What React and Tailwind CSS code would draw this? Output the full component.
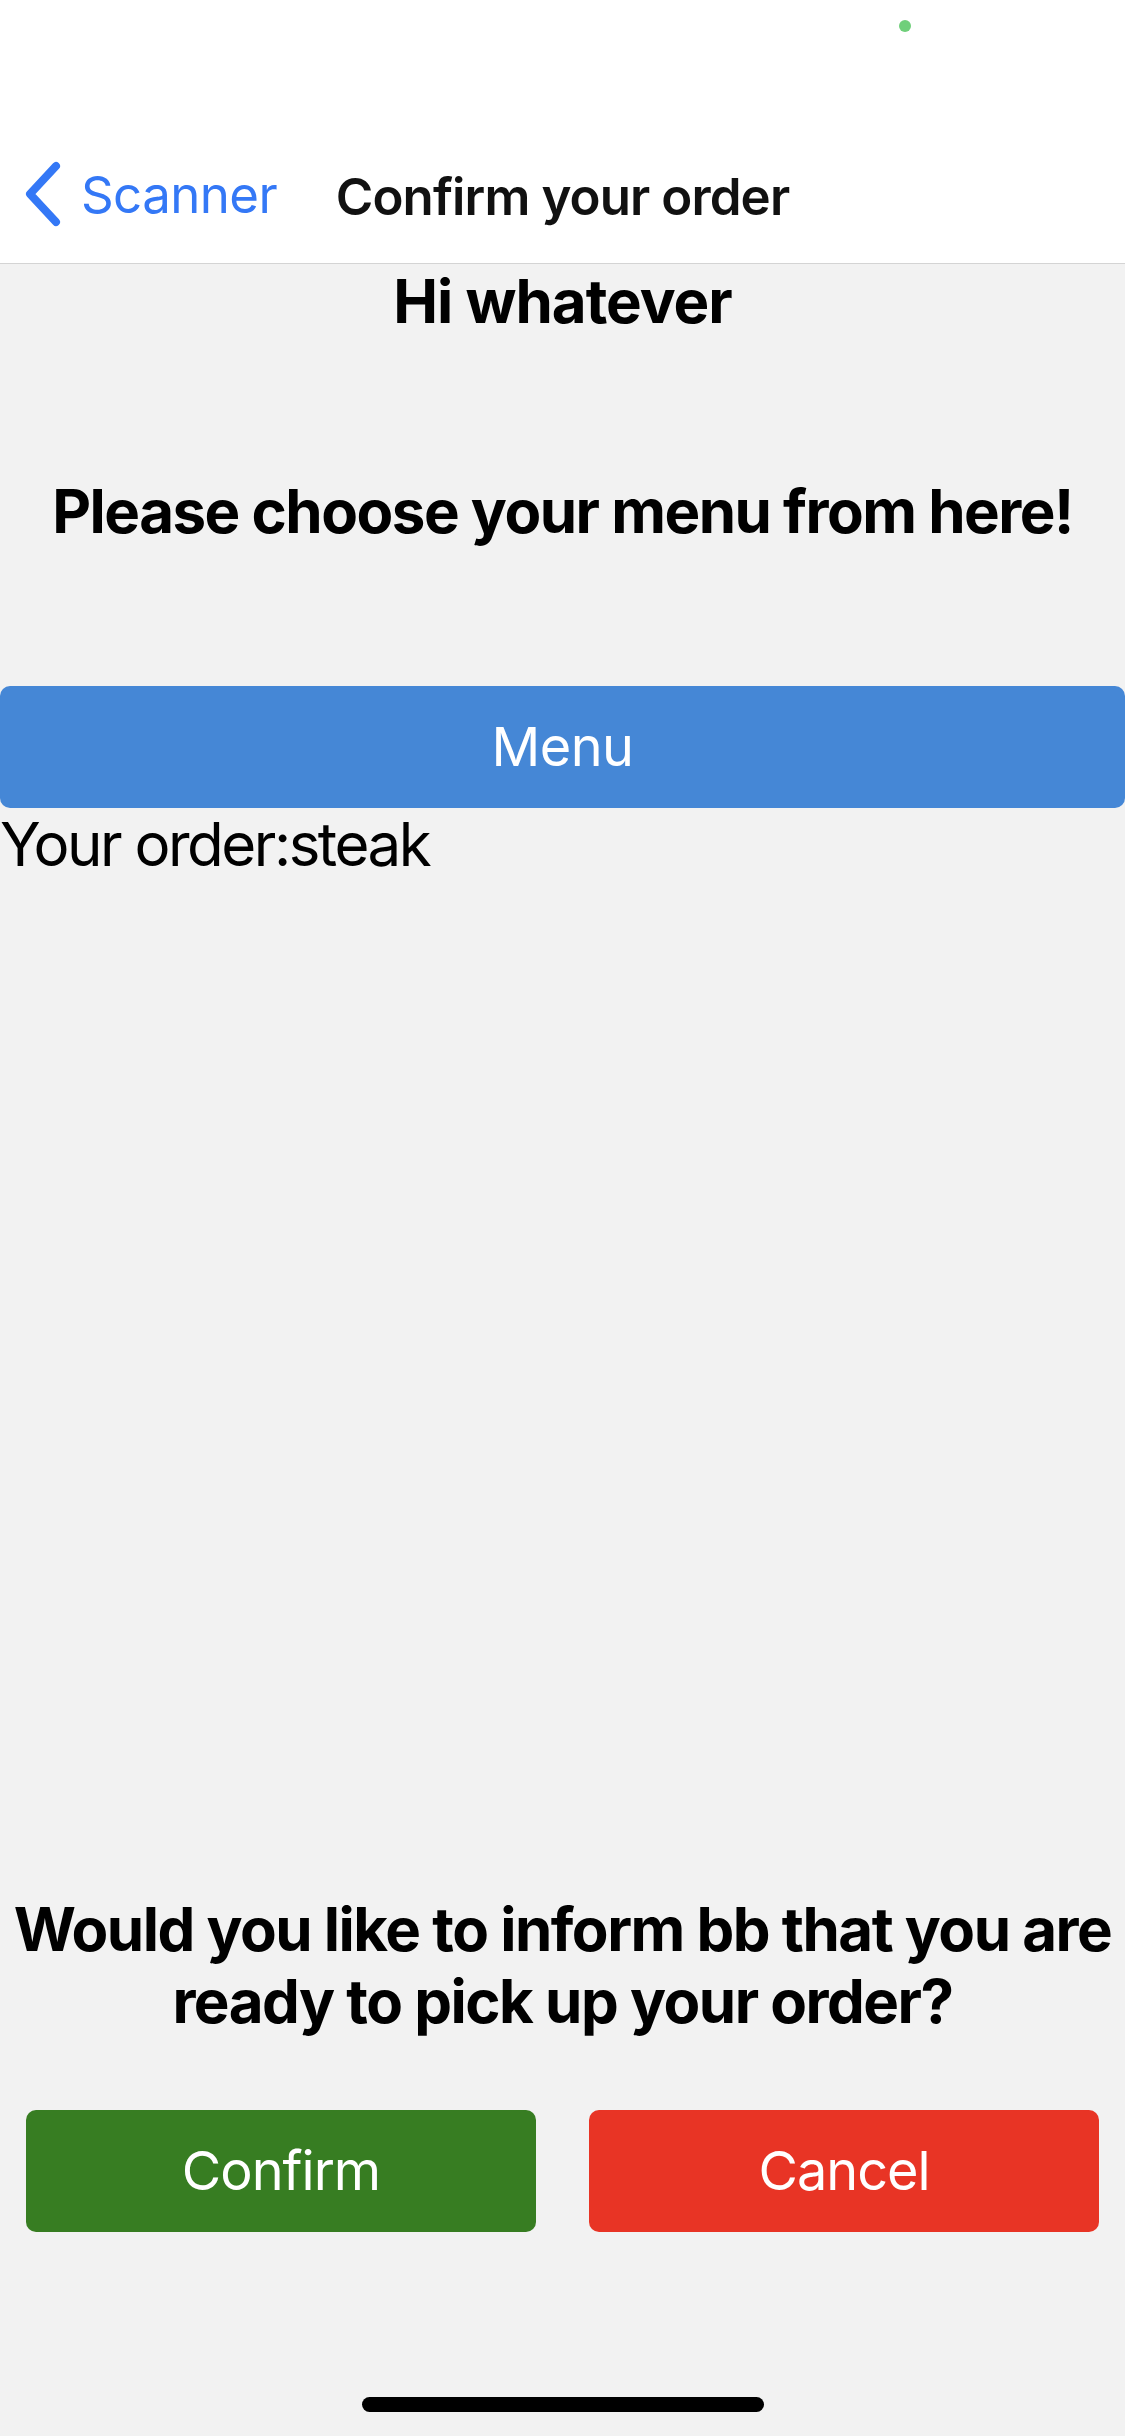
import { ChevronLeft } from "lucide-react";

function StatusBar() {
  return (
    <div className="relative h-[132px] bg-white">
      <span className="absolute left-[899px] top-[20px] h-[12px] w-[12px] rounded-full bg-[#6fcf7a]" />
    </div>
  );
}

function NavBar() {
  return (
    <div className="relative flex h-[132px] items-center justify-center border-b border-[#d4d4d4] bg-white">
      <button className="absolute left-[22px] top-[29px] flex items-center text-[#3478f6]">
        <svg width="42" height="66" viewBox="0 0 42 66" fill="none" className="mr-[17px]">
          <path
            d="M34 5 L8 33 L34 61"
            stroke="currentColor"
            strokeWidth="8"
            strokeLinecap="round"
            strokeLinejoin="round"
          />
        </svg>
        <span className="text-[51px] leading-none tracking-[-0.6px]">Scanner</span>
      </button>
      <h1 className="-mt-[2px] text-[51px] font-semibold leading-none tracking-[-0.9px] text-[#111]">
        Confirm your order
      </h1>
    </div>
  );
}

export default function App() {
  return (
    <div
      className="relative flex h-[2436px] w-[1125px] flex-col overflow-hidden bg-[#f2f2f2] text-black"
      style={{ fontFamily: "Inter, 'Noto Sans', sans-serif" }}
    >
      <StatusBar />
      <NavBar />

      <main className="flex flex-1 flex-col">
        <h2 className="mt-[1px] text-center text-[60px] font-bold leading-[72px] tracking-[-1px]">
          Hi whatever
        </h2>
        <p className="mt-[138px] text-center text-[60px] font-bold leading-[72px] tracking-[-1.5px]">
          Please choose your menu from here!
        </p>
        <button className="mt-[139px] h-[122px] w-full rounded-[10px] bg-[#4587d6] text-[54px] leading-none tracking-[-0.5px] text-white">
          Menu
        </button>
        <p className="text-[60px] leading-[72px] tracking-[-2.5px]">Your order:steak</p>

        <div className="flex-1" />

        <p className="text-center text-[60px] font-bold leading-[72px] tracking-[-1.5px]">
          Would you like to inform bb that you are
          <br />
          ready to pick up your order?
        </p>
        <div className="mb-[204px] mt-[73px] flex gap-[53px] px-[26px]">
          <button className="h-[122px] flex-1 rounded-[10px] bg-[#377d22] text-[54px] leading-none tracking-[-1px] text-white">
            Confirm
          </button>
          <button className="h-[122px] flex-1 rounded-[10px] bg-[#e83425] text-[54px] leading-none tracking-[-1px] text-white">
            Cancel
          </button>
        </div>
      </main>

      <div className="absolute bottom-[24px] left-[362px] h-[15px] w-[402px] rounded-full bg-black" />
    </div>
  );
}
